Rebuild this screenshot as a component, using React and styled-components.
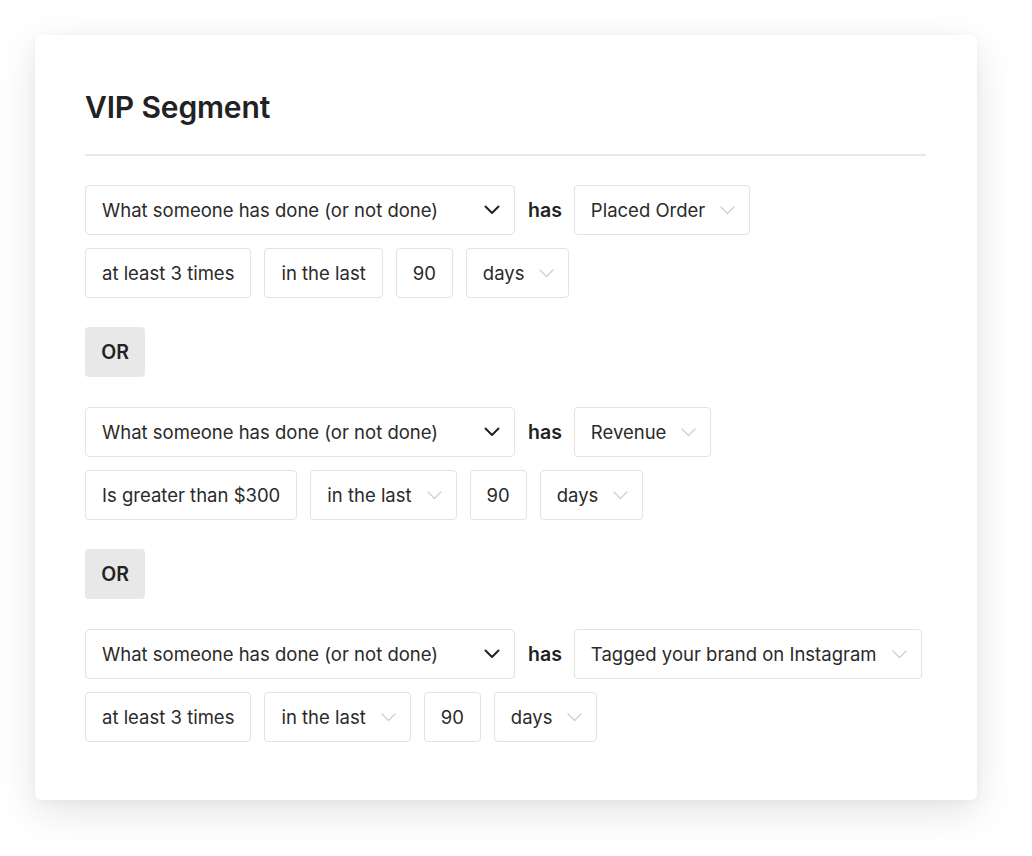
import styled, { createGlobalStyle } from 'styled-components';

const GlobalStyle = createGlobalStyle`
    html, body {
        margin: 0;
        padding: 0;
        background: #ffffff;
        font-family: Inter, "Liberation Sans", sans-serif;
        color: #222222;
    }
`

const Page = styled.div`
    padding: 35px 55px 56px 35px;
`

const Card = styled.section`
    width: 942px;
    box-sizing: border-box;
    background: #ffffff;
    border-radius: 6px;
    box-shadow: 0 12px 40px rgba(0, 0, 0, 0.11), 0 2px 8px rgba(0, 0, 0, 0.04);
    padding: 50px 51px 58px 50px;
`

const Title = styled.h1`
    font-size: 30px;
    font-weight: 600;
    letter-spacing: -0.15px;
    margin: 0;
    line-height: 44px;
    padding-bottom: 25px;
    border-bottom: 2px solid #e8e8e8;
    margin-bottom: 29px;
`

const Group = styled.div`
    display: flex;
    flex-direction: column;
    gap: 13px;
`

const Row = styled.div`
    display: flex;
    align-items: center;
    gap: 13px;
`

const Field = styled.div`
    display: flex;
    align-items: center;
    justify-content: space-between;
    box-sizing: border-box;
    height: 50px;
    width: ${p => p.$width ? `${p.$width}px` : 'auto'};
    padding: 0 ${p => p.$caret ? 14 : 16}px 0 16px;
    gap: 15px;
    border: 1px solid #e2e2e2;
    border-radius: 4px;
    font-size: 18.5px;
    color: #2a2a2a;
    background: #ffffff;
    white-space: nowrap;
`

const Has = styled.span`
    font-size: 19.5px;
    font-weight: 600;
    color: #222222;
    margin-right: -1px;
`

const OrButton = styled.button`
    display: block;
    width: 60px;
    height: 50px;
    border: none;
    border-radius: 4px;
    background: #e8e8e8;
    font-family: inherit;
    font-size: 19.5px;
    font-weight: 600;
    color: #222222;
    margin: 29px 0 30px;
    padding: 0;
`

const Caret = ({ dark }) => (
    dark ? (
        <svg width="16" height="10" viewBox="0 0 16 10" fill="none">
            <path d="M1.5 1.5 L8 8 L14.5 1.5" stroke="#222" strokeWidth="2" strokeLinecap="round" strokeLinejoin="round"/>
        </svg>
    ) : (
        <svg width="15" height="9" viewBox="0 0 15 9" fill="none">
            <path d="M1 1 L7.5 7.5 L14 1" stroke="#cfcfcf" strokeWidth="1.3" strokeLinecap="round" strokeLinejoin="round"/>
        </svg>
    )
)

const Select = ({ label, caret, width }) => (
    <Field $caret={caret} $width={width}>
        <span>{label}</span>
        {caret && <Caret dark={caret === 'dark'}/>}
    </Field>
)

const groups = [
    {
        event: 'Placed Order',
        rule: 'at least 3 times',
        lastCaret: false,
    },
    {
        event: 'Revenue',
        rule: 'Is greater than $300',
        lastCaret: true,
    },
    {
        event: 'Tagged your brand on Instagram',
        rule: 'at least 3 times',
        lastCaret: true,
    },
]

const App = () => {
    return (
        <Page>
            <GlobalStyle/>
            <Card>
                <Title>VIP Segment</Title>
                {groups.map((g, i) => (
                    <div key={i}>
                        {i > 0 && <OrButton>OR</OrButton>}
                        <Group>
                            <Row>
                                <Select label="What someone has done (or not done)" caret="dark" width={430}/>
                                <Has>has</Has>
                                <Select label={g.event} caret="light"/>
                            </Row>
                            <Row>
                                <Select label={g.rule}/>
                                <Select label="in the last" caret={g.lastCaret ? 'light' : null}/>
                                <Select label="90"/>
                                <Select label="days" caret="light"/>
                            </Row>
                        </Group>
                    </div>
                ))}
            </Card>
        </Page>
    )
}

export default App
